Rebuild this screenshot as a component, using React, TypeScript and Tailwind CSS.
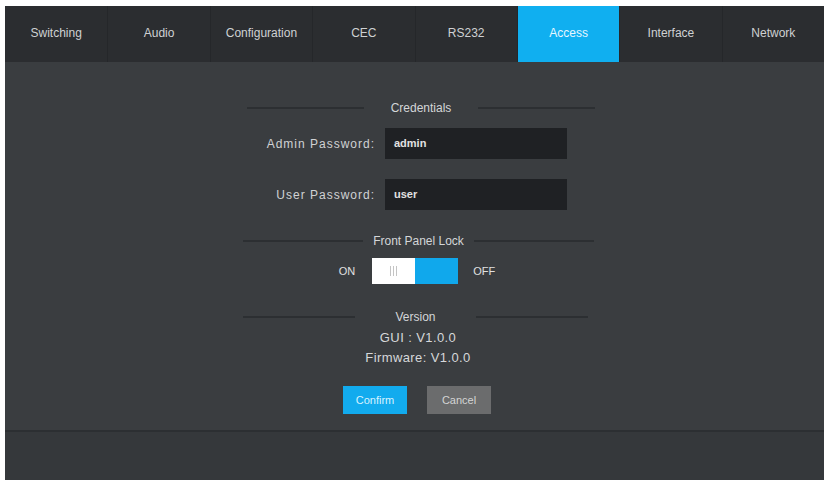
import { useState } from 'react';

const tabs = ['Switching', 'Audio', 'Configuration', 'CEC', 'RS232', 'Access', 'Interface', 'Network'];

function SectionTitle({ title, pad }: { title: string; pad: string }) {
  return (
    <div className="flex items-center">
      <div className="h-[2px] flex-1 bg-[#2c2f32]" />
      <span className={`${pad} text-[12px] leading-[16px] text-[#d4d6d8]`}>{title}</span>
      <div className="h-[2px] flex-1 bg-[#2c2f32]" />
    </div>
  );
}

function PasswordRow({ label, value }: { label: string; value: string }) {
  return (
    <div className="flex items-center">
      <label className="w-[135px] text-right text-[12px] tracking-[1px] text-[#d0d2d4]">{label}</label>
      <div className="ml-[10px] flex h-[31px] w-[182px] items-center bg-[#1f2124] px-[9px] text-[11px] font-semibold text-[#e2e2e2]">
        {value}
      </div>
    </div>
  );
}

export default function App() {
  const [active, setActive] = useState('Access');
  const [locked, setLocked] = useState(false);

  return (
    <div className="h-[484px] w-[828px] bg-white pb-[4px] pl-[5px] pr-[4px] pt-[6px] font-['Liberation_Sans',Arial,sans-serif]">
      <div className="flex h-full flex-col bg-[#3a3d40]">
        {/* Tabs */}
        <nav className="grid h-[56px] grid-cols-8 bg-[#2b2d30]">
          {tabs.map((tab, i) => (
            <button
              key={tab}
              onClick={() => setActive(tab)}
              className={`flex items-center justify-center pb-[3px] text-[12px] ${
                i > 0 ? 'border-l border-[#25272a]' : ''
              } ${active === tab ? 'bg-[#10aff0] text-[#e6f6ff]' : 'text-[#cfd1d3]'}`}
            >
              {tab}
            </button>
          ))}
        </nav>

        {/* Access settings */}
        <main className="flex-1">
          <div className="ml-[235px] w-[360px] pt-[38px]">
            <div className="pl-[7px] pr-[5px]">
              <SectionTitle title="Credentials" pad="px-[27px]" />
            </div>

            <div className="mt-[12px]">
              <PasswordRow label="Admin Password:" value="admin" />
            </div>
            <div className="mt-[20px]">
              <PasswordRow label="User Password:" value="user" />
            </div>

            <div className="mt-[23px] pl-[3px] pr-[6px]">
              <SectionTitle title="Front Panel Lock" pad="px-[10px]" />
            </div>

            <div className="mt-[9px] flex items-center justify-center pr-[6px] text-[11px] text-[#e0e0e0]">
              <span>ON</span>
              <button onClick={() => setLocked(!locked)} className="ml-[17px] flex h-[26px] w-[86px]">
                <span className="flex h-full w-1/2 items-center justify-center gap-[2px] bg-white">
                  <i className="h-[10px] w-px bg-[#c4c4c4]" />
                  <i className="h-[10px] w-px bg-[#c4c4c4]" />
                  <i className="h-[10px] w-px bg-[#c4c4c4]" />
                </span>
                <span className="h-full w-1/2 bg-[#10a8ec]" />
              </button>
              <span className="ml-[15px]">OFF</span>
            </div>

            <div className="mt-[25px] pl-[3px] pr-[12px]">
              <SectionTitle title="Version" pad="px-[40px]" />
            </div>

            <div className="mt-[3px] pr-[4px] text-center text-[13px] leading-[20px] tracking-[0.4px] text-[#d6d8da]">
              <p>GUI : V1.0.0</p>
              <p>Firmware: V1.0.0</p>
            </div>

            <div className="mt-[18px] flex justify-center gap-[20px] pr-[6px]">
              <button className="h-[28px] w-[64px] bg-[#12abee] text-[11px] text-[#d8f2ff]">Confirm</button>
              <button className="h-[28px] w-[64px] bg-[#6b6c6d] text-[11px] text-[#d4d4d4]">Cancel</button>
            </div>
          </div>
        </main>

        <footer className="h-[50px] border-t-2 border-[#2c2f32] bg-[#35383b]" />
      </div>
    </div>
  );
}
